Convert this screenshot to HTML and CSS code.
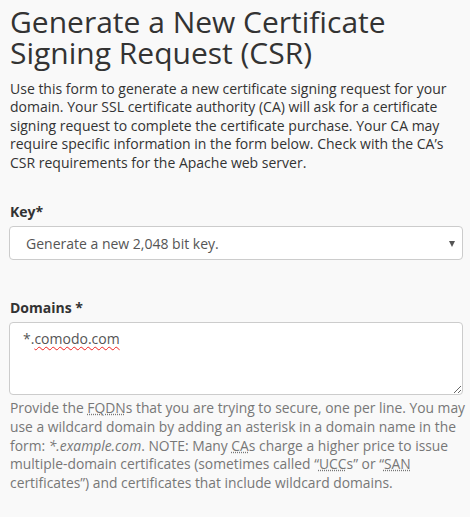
FILE: index.html
```html
<!DOCTYPE html>
<html lang="en">
<head>
    <meta charset="UTF-8">
    <title>Generate a New Certificate Signing Request (CSR)</title>
    <link rel="stylesheet" href="styles.css">
</head>
<body>

    <!-- CSR form -->
    <div class="page">
        <h1>Generate a New Certificate Signing Request (CSR)</h1>
        <p class="intro">Use this form to generate a new certificate signing request for your domain. Your SSL certificate authority (CA) will ask for a certificate signing request to complete the certificate purchase. Your CA may require specific information in the form below. Check with the CA’s CSR requirements for the Apache web server.</p>

        <div class="form-group">
            <label for="key">Key*</label>
            <div class="select-wrap">
                <select id="key" class="form-control">
                    <option>Generate a new 2,048 bit key.</option>
                </select>
            </div>
        </div>

        <div class="form-group">
            <label for="domains">Domains *</label>
            <div id="domains" class="form-control textarea" contenteditable="true" spellcheck="false">*.<span class="misspelled">comodo.com</span></div>
            <p class="help-block">Provide the <abbr title="Fully Qualified Domain Name">FQDN</abbr>s that you are trying to secure, one per line. You may use a wildcard domain by adding an asterisk in a domain name in the form: <em>*.example.com</em>. NOTE: Many <abbr title="Certificate Authority">CA</abbr>s charge a higher price to issue multiple-domain certificates (sometimes called “<abbr title="Unified Communications Certificate">UCC</abbr>s” or “<abbr title="Subject Alternative Name">SAN</abbr> certificates”) and certificates that include wildcard domains.</p>
        </div>
    </div>

</body>
</html>
```

FILE: styles.css
```css
body {
    font-family: 'Open Sans', 'Liberation Sans', sans-serif;
    font-size: 14px;
    background: #f9f9f9;
    color: #333;
    margin: 0;
    padding: 0;
}

.page {
    padding: 0 7px 0 9px;
}

h1 {
    font-size: 30px;
    font-weight: 400;
    line-height: 31px;
    margin: 6px 0 12px 1px;
}

.intro {
    line-height: 18.4px;
    margin: 0 0 30px 1px;
}

.form-group {
    margin-bottom: 38px;
}

.form-group label {
    display: block;
    font-weight: 700;
    margin: 0 0 5px 1px;
}

.select-wrap {
    position: relative;
}

.select-wrap::after {
    content: '';
    position: absolute;
    right: 8px;
    top: 15px;
    border-left: 3.5px solid transparent;
    border-right: 3.5px solid transparent;
    border-top: 6px solid #555;
    pointer-events: none;
}

.form-control {
    display: block;
    width: 100%;
    box-sizing: border-box;
    font-family: inherit;
    font-size: 14px;
    color: #555;
    background: #fff;
    border: 1px solid #ccc;
    border-radius: 4px;
}

select.form-control {
    height: 34px;
    padding: 0 0 0 16px;
    appearance: none;
    -webkit-appearance: none;
}

.textarea {
    height: 73px;
    padding: 6px 13px;
    line-height: 20px;
    resize: vertical;
    overflow: auto;
    outline: none;
}

.misspelled {
    text-decoration: underline wavy #e22;
    text-decoration-thickness: 1px;
    text-underline-offset: 2px;
}

.help-block {
    color: #777;
    font-size: 13.85px;
    line-height: 18.75px;
    margin: 4px -6px 0 1px;
}

abbr {
    text-decoration: underline dotted;
}
```
